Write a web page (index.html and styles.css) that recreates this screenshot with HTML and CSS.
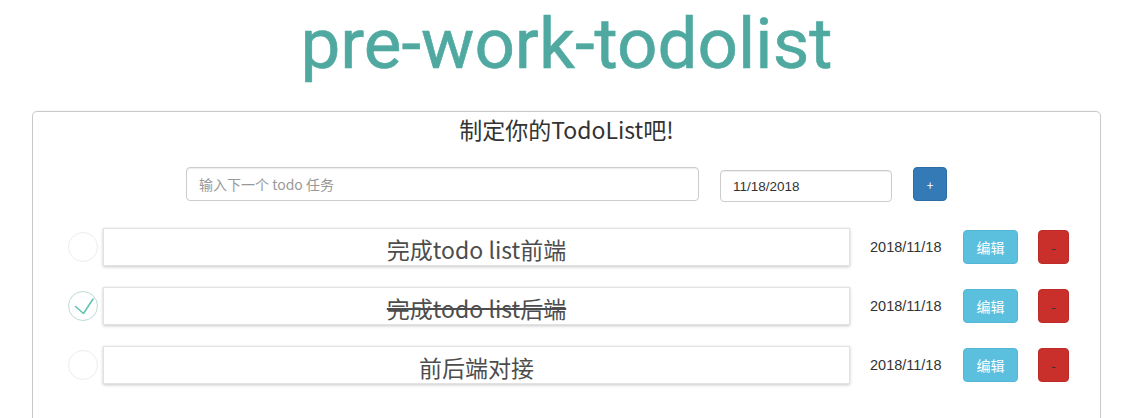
FILE: index.html
```html
<!DOCTYPE html>
<html lang="zh-CN">
<head>
<meta charset="utf-8">
<title>pre-work-todolist</title>
<link rel="stylesheet" href="styles.css">
</head>
<body>
  <div class="page">
    <h1 class="title">pre-work-todolist</h1>
    <div class="card">
      <h3 class="card-heading">制定你的TodoList吧!</h3>
      <div class="add-row">
        <input class="input task-input" type="text" placeholder="输入下一个 todo 任务">
        <input class="input date-input" type="text" value="11/18/2018">
        <button class="btn btn-add">+</button>
      </div>
      <ul class="todo-list">
        <li class="todo">
          <span class="toggle"></span>
          <div class="todo-text">完成todo list前端</div>
          <span class="todo-date">2018/11/18</span>
          <button class="btn btn-edit">编辑</button>
          <button class="btn btn-del">-</button>
        </li>
        <li class="todo done">
          <span class="toggle checked">
            <svg width="30" height="30" viewBox="0 0 30 30"><path d="M7.5 15.5 L15.5 22.5 L25 8" fill="none" stroke="#5dc2af" stroke-width="1.5" stroke-linecap="round" stroke-linejoin="round"/></svg>
          </span>
          <div class="todo-text">完成todo list后端</div>
          <span class="todo-date">2018/11/18</span>
          <button class="btn btn-edit">编辑</button>
          <button class="btn btn-del">-</button>
        </li>
        <li class="todo">
          <span class="toggle"></span>
          <div class="todo-text">前后端对接</div>
          <span class="todo-date">2018/11/18</span>
          <button class="btn btn-edit">编辑</button>
          <button class="btn btn-del">-</button>
        </li>
      </ul>
    </div>
  </div>
</body>
</html>
```

FILE: styles.css
```css
html, body {
  margin: 0;
  padding: 0;
  overflow: hidden;
  background: #fff;
}

body {
  font-family: "Noto Sans CJK SC", "Noto Sans", sans-serif;
  color: #333;
}

.page {
  margin-left: 32px;
  width: 1069px;
  height: 418px;
  overflow: hidden;
}

.title {
  margin: 0;
  padding-top: 4px;
  height: 111px;
  box-sizing: border-box;
  text-align: center;
  font-family: Roboto, "Liberation Sans", sans-serif;
  font-weight: 400;
  font-size: 71px;
  line-height: 80px;
  color: #4fa9a0;
  -webkit-text-stroke: 0.6px #4fa9a0;
}

.card {
  border: 1px solid #c9c9c9;
  border-radius: 5px;
  box-shadow: 0 1px 3px rgba(0, 0, 0, 0.18);
  height: 330px;
  box-sizing: border-box;
}

.card-heading {
  margin: 0;
  text-align: center;
  font-size: 23px;
  font-weight: 400;
  line-height: 34px;
  color: #333;
}

.add-row {
  display: flex;
  justify-content: center;
  align-items: flex-start;
  gap: 21px;
  margin-top: 21px;
}

.input {
  box-sizing: border-box;
  border: 1px solid #ccc;
  border-radius: 4px;
  box-shadow: inset 0 1px 1px rgba(0, 0, 0, 0.075);
  font-family: "Noto Sans CJK SC", "Noto Sans", sans-serif;
  font-size: 14px;
  color: #555;
  padding: 0 12px;
  outline: none;
  background: #fff;
}

.task-input {
  width: 513px;
  height: 34px;
}

.task-input::placeholder {
  color: #999;
}

.date-input {
  width: 172px;
  height: 32px;
  margin-top: 3px;
  font-family: "Liberation Sans", Arial, sans-serif;
  font-size: 13.5px;
  color: #333;
}

.btn {
  box-sizing: border-box;
  border: 1px solid transparent;
  border-radius: 4px;
  padding: 0;
  font-family: "Noto Sans CJK SC", "Noto Sans", sans-serif;
  cursor: pointer;
}

.btn-add {
  width: 34px;
  height: 34px;
  background: #337ab7;
  border-color: #2e6da4;
  color: #fff;
  font-size: 12px;
}

.todo-list {
  list-style: none;
  margin: 26px 0 0;
  padding: 0 0 0 35px;
  display: flex;
  flex-direction: column;
  gap: 21px;
}

.todo {
  display: flex;
  align-items: center;
  height: 38px;
}

.toggle {
  box-sizing: border-box;
  width: 30px;
  height: 30px;
  border: 1px solid #ededed;
  border-radius: 50%;
  margin-right: 5px;
  flex: none;
  display: flex;
  align-items: center;
  justify-content: center;
}

.toggle.checked {
  border-color: #bddad5;
}

.toggle svg {
  display: block;
  margin: -1px;
}

.todo-text {
  box-sizing: border-box;
  width: 747px;
  height: 38px;
  flex: none;
  border: 1px solid #e2e2e2;
  box-shadow: 0 1px 3px rgba(0, 0, 0, 0.22);
  text-align: center;
  font-size: 23px;
  line-height: 30px;
  padding-top: 5px;
  color: #4d4d4d;
}

.done .todo-text {
  text-decoration: line-through;
}

.todo-date {
  width: 73px;
  margin-left: 20px;
  white-space: nowrap;
  font-family: "Liberation Sans", Arial, sans-serif;
  font-size: 14.5px;
  color: #333;
}

.btn-edit {
  margin-left: 20px;
  width: 55px;
  height: 34px;
  background: #5bc0de;
  border-color: #53b6d6;
  color: #fff;
  font-size: 14px;
}

.btn-del {
  margin-left: 20px;
  width: 31px;
  height: 34px;
  background: #c9302c;
  border-color: #bd2c28;
  color: #333;
  font-size: 13px;
}
```
